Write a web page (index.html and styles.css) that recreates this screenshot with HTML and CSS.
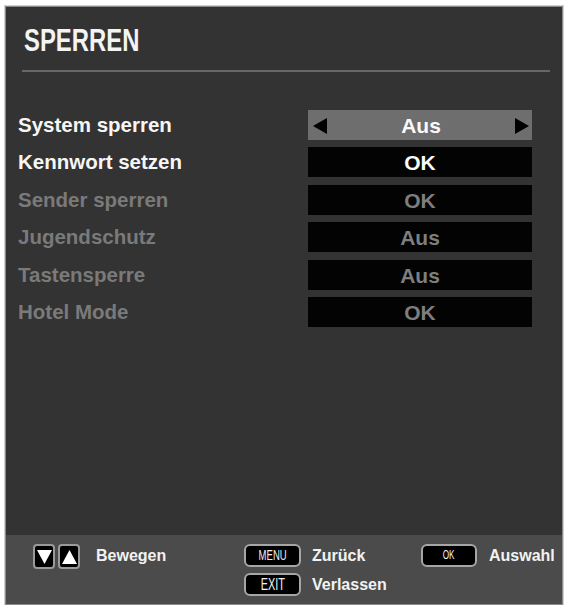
FILE: index.html
```html
<!DOCTYPE html>
<html lang="de">
<head>
<meta charset="utf-8">
<title>SPERREN</title>
<link rel="stylesheet" href="styles.css">
</head>
<body>
<div class="panel">
  <div class="main">
    <div class="header">
      <h1 class="title"><span class="narrow">SPERREN</span></h1>
      <div class="divider"></div>
    </div>
    <div class="list">
      <div class="row active">
        <div class="label">System sperren</div>
        <div class="value selected">
          <svg class="arrow" width="14" height="16" viewBox="0 0 14 16"><polygon points="0,8 14,0 14,16" fill="#000"/></svg>
          <span class="vtext">Aus</span>
          <svg class="arrow" width="14" height="16" viewBox="0 0 14 16"><polygon points="14,8 0,0 0,16" fill="#000"/></svg>
        </div>
      </div>
      <div class="row active">
        <div class="label">Kennwort setzen</div>
        <div class="value"><span class="vtext">OK</span></div>
      </div>
      <div class="row disabled">
        <div class="label">Sender sperren</div>
        <div class="value"><span class="vtext">OK</span></div>
      </div>
      <div class="row disabled">
        <div class="label">Jugendschutz</div>
        <div class="value"><span class="vtext">Aus</span></div>
      </div>
      <div class="row disabled">
        <div class="label">Tastensperre</div>
        <div class="value"><span class="vtext">Aus</span></div>
      </div>
      <div class="row disabled">
        <div class="label">Hotel Mode</div>
        <div class="value"><span class="vtext">OK</span></div>
      </div>
    </div>
  </div>
  <div class="footer">
    <div class="group nav">
      <div class="keys">
        <div class="arrowkey">
          <svg width="15" height="14" viewBox="0 0 15 14"><polygon points="0,0 15,0 7.5,14" fill="#fff"/></svg>
        </div>
        <div class="arrowkey">
          <svg width="15" height="14" viewBox="0 0 15 14"><polygon points="0,14 15,14 7.5,0" fill="#fff"/></svg>
        </div>
      </div>
      <span class="ftext">Bewegen</span>
    </div>
    <div class="group menu">
      <div class="key"><span class="keytext small">MENU</span></div>
      <span class="ftext">Zurück</span>
      <div class="key"><span class="keytext">EXIT</span></div>
      <span class="ftext">Verlassen</span>
    </div>
    <div class="group ok">
      <div class="key okkey"><span class="keytext tiny">OK</span></div>
      <span class="ftext">Auswahl</span>
    </div>
  </div>
</div>
</body>
</html>
```

FILE: styles.css
```css
html, body {
  margin: 0;
  padding: 0;
  background: #ffffff;
}

body {
  font-family: "Liberation Sans", Arial, sans-serif;
}

.panel {
  margin: 6px 0 0 5px;
  width: 556px;
  height: 597px;
  border: 1px solid #8a8a8a;
  box-shadow: 0 0 0 1px #cfcfcf;
  display: flex;
  flex-direction: column;
  background: #333333;
}

.main {
  flex: 1;
  display: flex;
  flex-direction: column;
}

.header {
  padding: 18px 12px 0 16px;
}

.title {
  margin: 0 0 0 2px;
  font-size: 31px;
  line-height: 31px;
  font-weight: bold;
  color: #f4f4f4;
}

.narrow {
  display: inline-block;
  transform: scaleX(0.77);
  transform-origin: left center;
}

.divider {
  margin-top: 14px;
  height: 2px;
  background: #686868;
}

.list {
  padding: 38px 0 0 12px;
  display: flex;
  flex-direction: column;
  gap: 7.4px;
}

.row {
  display: grid;
  grid-template-columns: 290px 224px;
  height: 30px;
  align-items: center;
}

.label {
  font-size: 20.5px;
  font-weight: bold;
  line-height: 28px;
}

.row.active .label { color: #f6f6f6; }
.row.disabled .label { color: #7a7a7a; }

.value {
  height: 30px;
  background: #030303;
  display: flex;
  align-items: center;
  justify-content: center;
}

.value.selected {
  background: #6e6e6e;
  justify-content: space-between;
  padding: 0 3px 0 5px;
}

.vtext {
  font-size: 21px;
  font-weight: bold;
  line-height: 30px;
  padding-top: 2px;
}

.row.active .vtext { color: #fafafa; }
.row.disabled .vtext { color: #7e7e7e; }

.arrow {
  display: block;
  margin-top: 1px;
}

.footer {
  height: 69px;
  background: #4b4b4b;
  display: flex;
  padding: 9px 0 0 27px;
  box-sizing: border-box;
  color: #f2f2f2;
}

.group {
  display: flex;
  align-items: flex-start;
}

.nav {
  width: 211px;
  gap: 16px;
}

.keys {
  display: flex;
  gap: 3px;
}

.arrowkey {
  width: 22px;
  height: 25px;
  box-sizing: border-box;
  border: 2px solid #9a9a9a;
  border-radius: 4px;
  background: #000;
  display: flex;
  align-items: center;
  justify-content: center;
}

.arrowkey svg { display: block; }

.ftext {
  font-size: 16px;
  font-weight: bold;
  line-height: 24px;
}

.menu {
  width: 177px;
  display: grid;
  grid-template-columns: 57px auto;
  column-gap: 11px;
  row-gap: 5px;
  align-content: start;
  justify-content: start;
}

.key {
  width: 57px;
  height: 23px;
  box-sizing: border-box;
  border: 2px solid #a6a6a6;
  border-radius: 6px;
  background: #000;
  display: flex;
  align-items: center;
  justify-content: center;
  overflow: hidden;
}

.okkey {
  width: 56px;
}

.ok {
  gap: 12px;
}

.keytext {
  display: inline-block;
  font-size: 16px;
  line-height: 19px;
  color: #f0f0f0;
  transform: scaleX(0.68);
}

.keytext.small {
  font-size: 14px;
}

.keytext.tiny {
  font-size: 12px;
}
```
